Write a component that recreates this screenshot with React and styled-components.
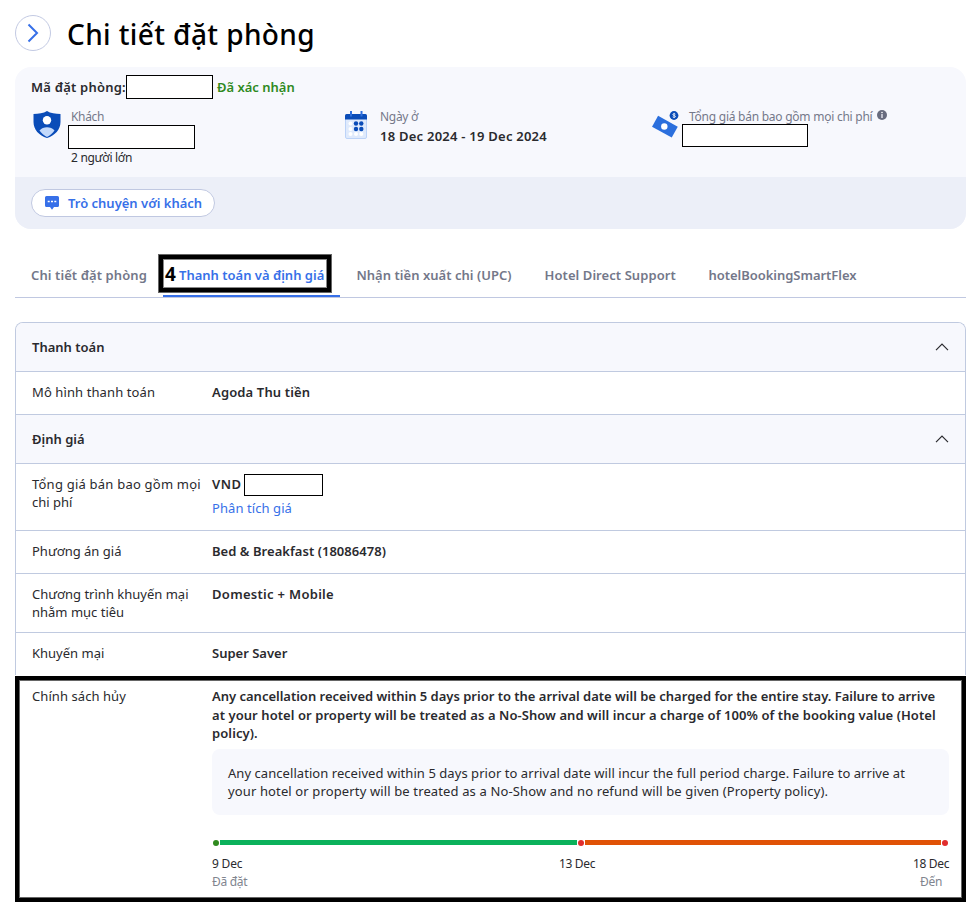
import React from 'react'
import styled, { createGlobalStyle } from 'styled-components'

const GlobalStyle = createGlobalStyle`
*{
    box-sizing: border-box;
    margin: 0;
    padding: 0;
}
body{
    background-color: #fff;
    color: #2a2a2e;
    font-family: 'Noto Sans', 'Open Sans', sans-serif;
    font-size: 13px;
}
`

const Page = styled.main`
width: 978px;
height: 906px;
padding: 15px 12px 0 15px;
overflow: hidden;
`

const Text = styled.span`
display: block;
white-space: nowrap;
letter-spacing: ${props => props.$ls || 0}px;
`

const Header = styled.header`
display: flex;
align-items: center;
height: 36px;
gap: 16px;
`

const RoundButton = styled.button`
width: 36px;
height: 36px;
border: 1px solid #c3cae3;
border-radius: 50%;
background-color: #fff;
display: flex;
align-items: center;
justify-content: center;
`

const Title = styled.h1`
color: #000;
font-size: 28px;
font-weight: 500;
line-height: 36px;
letter-spacing: .39px;
padding-top: 2px;
`

const Card = styled.section`
margin-top: 16px;
height: 162px;
border-radius: 16px;
overflow: hidden;
background-color: #f7f8fd;
`

const CardBody = styled.div`
height: 110px;
padding: 8px 16px 0;
`

const BookingId = styled.div`
display: flex;
align-items: center;
height: 24px;
font-weight: 600;
`

const Confirmed = styled(Text)`
color: #2f8a1e;
margin-left: 4px;
`

const Redacted = styled.div`
flex: none;
width: ${props => props.$w}px;
height: ${props => props.$h}px;
margin: ${props => props.$m || 0};
border: 1px solid #000;
background-color: #fff;
`

const Facts = styled.div`
display: grid;
grid-template-columns: 309px 309px 1fr;
padding-top: 10px;
`

const Fact = styled.div`
display: flex;
gap: ${props => props.$gap}px;
padding-left: ${props => props.$pl}px;

&>svg{
    flex: none;
    margin-top: 2px;
}
`

const FactLabel = styled.div`
display: flex;
align-items: flex-start;
gap: 5px;
height: 16px;
line-height: 16px;
font-size: 12px;
color: #75798a;

svg{
    margin-top: 1px;
}
`

const FactValue = styled(Text)`
font-weight: 600;
line-height: 22px;
`

const FactNote = styled(Text)`
font-size: 12px;
line-height: 16px;
`

const CardFooter = styled.div`
height: 52px;
padding: 12px 16px;
background-color: #eceff8;
`

const ChatButton = styled.button`
display: flex;
align-items: center;
gap: 9px;
width: 184px;
height: 28px;
padding-left: 13px;
border: 1px solid #c0c8e1;
border-radius: 14px;
background-color: #fff;
color: #3770e8;
font: inherit;
font-weight: 600;
`

const Tabs = styled.nav`
display: flex;
margin-top: 24px;
height: 45px;
border-bottom: 1px solid #c0c8e1;
`

const Tab = styled.a`
position: relative;
width: ${props => props.$w}px;
padding: 0 16px;
line-height: 44px;
font-weight: 600;
color: ${props => props.$active ? '#3770e8' : '#737789'};
border-bottom: ${props => props.$active ? '2px solid #3770e8' : 'none'};
`

const TabMark = styled.div`
position: absolute;
top: 2px;
left: -4px;
width: 172px;
height: 37px;
padding-left: 2px;
border: 4px solid #000;
box-shadow: 0 0 0 1px #666, inset 0 0 0 1px #888;
color: #000;
font-size: 19px;
font-weight: 700;
line-height: 31px;
`

const Panel = styled.section`
margin-top: 24px;
border: 1px solid #c0cae0;
border-bottom: none;
border-radius: 8px 8px 0 0;
overflow: hidden;
`

const PanelHead = styled.div`
display: flex;
align-items: center;
justify-content: space-between;
height: 49px;
padding: 0 16px;
border-bottom: 1px solid #c0cae0;
background-color: #f7f8fd;
font-weight: 600;
`

const Row = styled.div`
display: grid;
grid-template-columns: 180px 1fr;
height: ${props => props.$h}px;
padding: 11px 16px 0;
line-height: 18px;
border-bottom: ${props => props.$last ? 'none' : '1px solid #c0cae0'};
`

const Value = styled.div`
font-weight: 600;
`

const Price = styled.div`
display: flex;
height: 18px;
`

const BreakdownLink = styled.a`
display: block;
margin-top: 6px;
color: #3770e8;
font-weight: 400;
`

const PolicyFrame = styled.div`
width: 951px;
height: 226px;
margin-top: 1px;
border: 4px solid #000;
display: grid;
grid-template-columns: 180px 1fr;
padding: 7px 13px 0;
line-height: 18px;
background-color: #fff;
box-shadow: inset 0 0 0 1px #666;
`

const PolicyText = styled.div`
font-weight: 600;
line-height: 18.5px;
`

const PolicyBox = styled.div`
margin-top: 6px;
height: 66px;
padding: 15px 16px;
border-radius: 8px;
background-color: #f7f8fd;
`

const Timeline = styled.div`
display: flex;
align-items: center;
height: 6px;
margin-top: 25px;
padding: 0 1px;
gap: 1px;
`

const Dot = styled.i`
flex: none;
width: 6px;
height: 6px;
border-radius: 50%;
background-color: ${props => props.$color};
`

const Bar = styled.i`
flex: 1;
height: 5px;
margin-bottom: 1px;
background-color: ${props => props.$color};
`

const Stops = styled.div`
display: flex;
justify-content: space-between;
margin-top: 9px;
font-size: 12px;
line-height: 18px;
`

const Stop = styled.div`
width: ${props => props.$w}px;
text-align: ${props => props.$align || 'left'};

small{
    display: block;
    white-space: nowrap;
    font-size: 12px;
    letter-spacing: -.3px;
    color: #81858f;
}
`

const ShieldIcon = () => (
    <svg width="28" height="27" viewBox="0 0 28 27">
        <path d="M14 0C10.500 2.300 5.500 3 .500 3v8c0 7.500 5.500 13.500 13.500 16 8-2.500 13.500-8.500 13.500-16V3C22.500 3 17.500 2.300 14 0z" fill="#0a4cb8" />
        <path d="M6.500 19.500C8.500 17.300 11 16.300 14 16.300s5.500 1 7.500 3.200C19.500 22.500 17 24.600 14 26c-3-1.400-5.500-3.500-7.500-6.500z" fill="#c3d9fb" />
        <circle cx="14" cy="9.300" r="4.200" fill="#fff" />
    </svg>
)

const CalendarIcon = () => (
    <svg width="22" height="28" viewBox="0 0 22 28">
        <rect x=".5" y="4" width="21" height="23.500" rx="1.500" fill="#dfeafc" stroke="#bcd3f8" />
        <path d="M0 8.500V4.500Q0 3 1.500 3h19Q22 3 22 4.500v4z" fill="#0a4cb8" />
        <path d="M6 0v5.500M16.500 0v5.500" stroke="#2e6fdc" strokeWidth="2" />
        <g fill="#fff">
            <circle cx="5.500" cy="12.500" r="2" />
            <circle cx="5.500" cy="18" r="2" />
            <circle cx="5.500" cy="23" r="2" />
            <circle cx="11" cy="23" r="2" />
            <circle cx="16.300" cy="23" r="2" />
        </g>
        <g fill="#0a4cb8">
            <circle cx="11" cy="12.500" r="2.200" />
            <circle cx="16.300" cy="12.500" r="2.200" />
            <circle cx="11" cy="18" r="2.200" />
            <circle cx="16.300" cy="18" r="2.200" />
        </g>
    </svg>
)

const MoneyIcon = () => (
    <svg width="28" height="28" viewBox="0 0 28 28">
        <g transform="rotate(29 13 16)">
            <rect x="1.500" y="9.500" width="22.500" height="12.500" fill="#2b6fdd" />
        </g>
        <circle cx="12.300" cy="15.500" r="3.200" fill="#fff" />
        <circle cx="22" cy="4.500" r="4.400" fill="#0a4cb8" />
        <path d="M23.400 3.200c-.6-.7-2.600-.6-2.600.4 0 1.100 2.700.7 2.700 1.900 0 1-2.100 1.100-2.800.3M22.100 1.900v5.200" fill="none" stroke="#fff" strokeWidth=".8" />
    </svg>
)

const InfoIcon = () => (
    <svg width="10" height="10" viewBox="0 0 10 10">
        <circle cx="5" cy="5" r="5" fill="#686c7e" />
        <circle cx="5" cy="2.500" r=".8" fill="#fff" />
        <path d="M5 4v4" fill="none" stroke="#e4e6ee" strokeWidth="1.400" />
    </svg>
)

const ChatIcon = () => (
    <svg width="14" height="14" viewBox="0 0 14 14">
        <path d="M1.500 0h11Q14 0 14 1.500v8Q14 11 12.500 11H9l-2 2.700L5 11H1.500Q0 11 0 9.500v-8Q0 0 1.500 0z" fill="#3770e8" />
        <path d="M2.700 5.500h2M6 5.500h2M9.300 5.500h2" stroke="#fff" strokeWidth="1.600" />
    </svg>
)

const ChevronUp = () => (
    <svg width="14" height="8" viewBox="0 0 14 8">
        <path d="M1 7.200 7 1.200l6 6" fill="none" stroke="#2a2a2e" strokeWidth="1.200" />
    </svg>
)

const rows = [
    { label: ['Phương án giá'], value: 'Bed & Breakfast (18086478)', ls: .04, h: 43 },
    { label: ['Chương trình khuyến mại', 'nhằm mục tiêu'], value: 'Domestic + Mobile', ls: .3, h: 59 },
    { label: ['Khuyến mại'], value: 'Super Saver', ls: 0, h: 42, last: true },
]

const App = () => {
    return (
        <Page>
            <GlobalStyle />
            <Header>
                <RoundButton>
                    <svg width="12" height="20" viewBox="0 0 12 20">
                        <path d="M1.500 1.500 10 10l-8.500 8.500" fill="none" stroke="#3770e8" strokeWidth="2" />
                    </svg>
                </RoundButton>
                <Title>Chi tiết đặt phòng</Title>
            </Header>

            <Card>
                <CardBody>
                    <BookingId>
                        <Text $ls={.22}>Mã đặt phòng:</Text>
                        <Redacted $w={87} $h={24} />
                        <Confirmed>Đã xác nhận</Confirmed>
                    </BookingId>
                    <Facts>
                        <Fact $pl={2} $gap={10}>
                            <ShieldIcon />
                            <div>
                                <FactLabel><Text $ls={-.35}>Khách</Text></FactLabel>
                                <Redacted $w={127} $h={24} $m="0 0 1px -3px" />
                                <FactNote $ls={-.3}>2 người lớn</FactNote>
                            </div>
                        </Fact>
                        <Fact $pl={5} $gap={13}>
                            <CalendarIcon />
                            <div>
                                <FactLabel><Text $ls={-.3}>Ngày ở</Text></FactLabel>
                                <FactValue $ls={.24}>18 Dec 2024 - 19 Dec 2024</FactValue>
                            </div>
                        </Fact>
                        <Fact $pl={3} $gap={9}>
                            <MoneyIcon />
                            <div>
                                <FactLabel><Text $ls={-.25}>Tổng giá bán bao gồm mọi chi phí</Text><InfoIcon /></FactLabel>
                                <Redacted $w={126} $h={23} $m="-1px 0 0 -7px" />
                            </div>
                        </Fact>
                    </Facts>
                </CardBody>
                <CardFooter>
                    <ChatButton><ChatIcon /><Text>Trò chuyện với khách</Text></ChatButton>
                </CardFooter>
            </Card>

            <Tabs>
                <Tab $w={148}><Text $ls={.09}>Chi tiết đặt phòng</Text></Tab>
                <Tab $w={177.4} $active><Text>Thanh toán và định giá</Text><TabMark>4</TabMark></Tab>
                <Tab $w={188.2}><Text $ls={.04}>Nhận tiền xuất chi (UPC)</Text></Tab>
                <Tab $w={164}><Text $ls={.07}>Hotel Direct Support</Text></Tab>
                <Tab $w={181}><Text $ls={-.04}>hotelBookingSmartFlex</Text></Tab>
            </Tabs>

            <Panel>
                <PanelHead><Text>Thanh toán</Text><ChevronUp /></PanelHead>
                <Row $h={43}>
                    <Text $ls={.1}>Mô hình thanh toán</Text>
                    <Value><Text $ls={.14}>Agoda Thu tiền</Text></Value>
                </Row>
                <PanelHead><Text>Định giá</Text><ChevronUp /></PanelHead>
                <Row $h={67}>
                    <div>
                        <Text $ls={.22}>Tổng giá bán bao gồm mọi</Text>
                        <Text>chi phí</Text>
                    </div>
                    <Value>
                        <Price><Text $ls={.55}>VND</Text><Redacted $w={79} $h={22} $m="-1px 0 0 2px" /></Price>
                        <BreakdownLink><Text $ls={.08}>Phân tích giá</Text></BreakdownLink>
                    </Value>
                </Row>
                {rows.map(row => (
                    <Row key={row.value} $h={row.h} $last={row.last}>
                        <div>{row.label.map(line => <Text key={line}>{line}</Text>)}</div>
                        <Value><Text $ls={row.ls}>{row.value}</Text></Value>
                    </Row>
                ))}
            </Panel>

            <PolicyFrame>
                <Text $ls={.07}>Chính sách hủy</Text>
                <div>
                    <PolicyText>
                        <Text $ls={-.01}>Any cancellation received within 5 days prior to the arrival date will be charged for the entire stay. Failure to arrive</Text>
                        <Text $ls={.07}>at your hotel or property will be treated as a No-Show and will incur a charge of 100% of the booking value (Hotel</Text>
                        <Text $ls={.1}>policy).</Text>
                    </PolicyText>
                    <PolicyBox>
                        <Text $ls={.055}>Any cancellation received within 5 days prior to arrival date will incur the full period charge. Failure to arrive at</Text>
                        <Text $ls={.13}>your hotel or property will be treated as a No-Show and no refund will be given (Property policy).</Text>
                    </PolicyBox>
                    <Timeline>
                        <Dot $color="#2f8a1e" />
                        <Bar $color="#0bb15b" />
                        <Dot $color="#e12d2d" />
                        <Bar $color="#e05206" />
                        <Dot $color="#e12d2d" />
                    </Timeline>
                    <Stops>
                        <Stop $w={30}><Text $ls={-.2}>9 Dec</Text><small>Đã đặt</small></Stop>
                        <Stop $w={37}><Text $ls={-.35}>13 Dec</Text></Stop>
                        <Stop $w={36} $align="center"><Text $ls={-.35}>18 Dec</Text><small>Đến</small></Stop>
                    </Stops>
                </div>
            </PolicyFrame>
        </Page>
    )
}

export default App
